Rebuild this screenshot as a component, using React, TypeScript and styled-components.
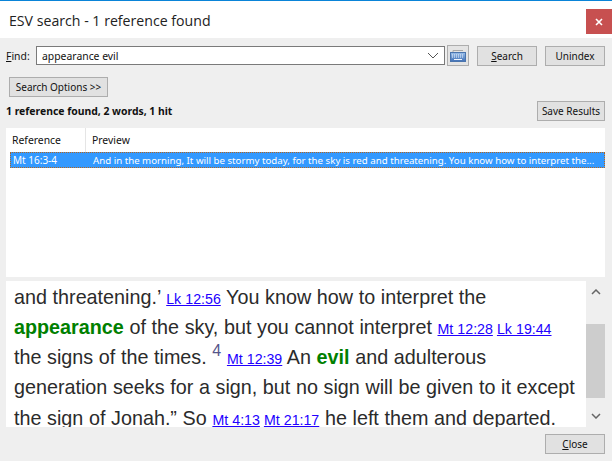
import styled, { createGlobalStyle } from 'styled-components'

const uiFont = `"Noto Sans", "DejaVu Sans", sans-serif`

const GlobalStyle = createGlobalStyle`
  html, body {
    margin: 0;
    padding: 0;
    background: #f0f0f0;
  }
  * {
    box-sizing: border-box;
  }
`

const Dialog = styled.div`
  width: 612px;
  height: 461px;
  display: flex;
  flex-direction: column;
  overflow: hidden;
  background: #efefef;
  font-family: ${uiFont};
  font-size: 10.4px;
  color: #111;
`

const TitleBar = styled.div`
  height: 38px;
  flex: none;
  display: flex;
  justify-content: space-between;
  align-items: flex-start;
  background: #fff;
  border-top: 1px solid #0a84d8;
`

const Title = styled.div`
  margin: 10px 0 0 9px;
  font-family: "Open Sans", sans-serif;
  font-size: 14.15px;
  line-height: 19px;
  color: #222;
`

const CloseBox = styled.div`
  width: 26px;
  height: 25px;
  margin-top: 8px;
  display: flex;
  align-items: center;
  justify-content: center;
  background: #c75050;
`

const Body = styled.div`
  flex: 1;
  display: flex;
  flex-direction: column;
  padding: 0 7px 8px 6px;
`

const FindRow = styled.div`
  height: 21px;
  margin-top: 7px;
  display: flex;
  align-items: center;
`

const FindLabel = styled.label`
  width: 30px;
  flex: none;
`

const Combo = styled.div`
  width: 409px;
  height: 19px;
  flex: none;
  display: flex;
  align-items: center;
  justify-content: space-between;
  padding: 0 5px;
  background: #fff;
  border: 1px solid #7a7a7a;
`

const KeyButton = styled.div`
  width: 22px;
  height: 21px;
  margin: 0 8px 0 2px;
  flex: none;
  display: flex;
  align-items: center;
  justify-content: center;
  background: #e4e4e4;
  border: 1px solid #adadad;
`

const Button = styled.button<{ $width: number }>`
  width: ${p => p.$width}px;
  height: 20px;
  flex: none;
  padding: 0;
  background: #e1e1e1;
  border: 1px solid #adadad;
  font-family: inherit;
  font-size: 10px;
  color: #111;
  white-space: nowrap;
`

const ActionGroup = styled.div`
  display: flex;
  gap: 8px;
`

const OptionsRow = styled.div`
  margin: 11px 0 0 3px;
  flex: none;
`

const ResultBar = styled.div`
  height: 20px;
  margin-top: 4px;
  display: flex;
  align-items: center;
  justify-content: space-between;
`

const Summary = styled.div`
  font-weight: 700;
`

const ResultsPanel = styled.div`
  height: 149px;
  margin-top: 7px;
  flex: none;
  background: #fff;
`

const HeaderRow = styled.div`
  height: 24px;
  display: flex;
  align-items: center;
  padding-left: 6px;
`

const HeaderCell = styled.div<{ $width?: number }>`
  width: ${p => (p.$width ? `${p.$width}px` : 'auto')};
  height: 100%;
  display: flex;
  align-items: center;
  padding-left: ${p => (p.$width ? 0 : 6)}px;
  border-right: ${p => (p.$width ? '1px solid #e5e5e5' : 'none')};
`

const SelectedRow = styled.div`
  height: 16px;
  margin-left: 4px;
  display: flex;
  align-items: center;
  background: #3399ff;
  outline: 1px dotted #b5651d;
  outline-offset: -1px;
  color: #fff;
  font-size: 10px;
  white-space: nowrap;
  overflow: hidden;
`

const RefCell = styled.div`
  width: 83px;
  flex: none;
  padding-left: 3px;
`

const PreviewCell = styled.div`
  flex: 1;
  min-width: 0;
  font-size: 9.7px;
`

const ReaderRow = styled.div`
  height: 146px;
  margin-top: 4px;
  flex: none;
  display: flex;
`

const Reader = styled.div`
  width: 580px;
  flex: none;
  overflow: hidden;
  padding: 1px 0 0 8px;
  background: #fff;
  font-family: "Liberation Sans", Arial, sans-serif;
  font-size: 19.75px;
  word-spacing: 0.15px;
  color: #2b2b2b;
`

const VerseLine = styled.div<{ $height: number }>`
  height: ${p => p.$height}px;
  line-height: ${p => p.$height}px;
  white-space: nowrap;
`

const Hit = styled.b`
  color: #008000;
`

const CrossRef = styled.a`
  font-size: 14.2px;
  color: #2200ff;
  text-decoration: underline;
`

const RefGap = styled.span`
  font-size: 14px;
`

const VerseNum = styled.sup`
  font-size: 16px;
  line-height: 0;
  color: #55558a;
`

const Scrollbar = styled.div`
  width: 19px;
  flex: none;
  display: flex;
  flex-direction: column;
  align-items: center;
`

const ScrollArrow = styled.div`
  height: 22px;
  width: 100%;
  flex: none;
  display: flex;
  align-items: center;
  justify-content: center;
`

const ScrollTrack = styled.div`
  flex: 1;
  width: 100%;
  padding: 21px 0 7px;
`

const ScrollThumb = styled.div`
  height: 74px;
  background: #cdcdcd;
`

const Footer = styled.div`
  margin-top: 7px;
  display: flex;
  justify-content: flex-end;
`

const Accel = styled.span`
  text-decoration: underline;
`

const KeyboardIcon = () => (
  <svg width="16" height="13" viewBox="0 0 16 13">
    <defs>
      <linearGradient id="keys" x1="0" y1="0" x2="0" y2="1">
        <stop offset="0" stopColor="#9cc0ea" />
        <stop offset="1" stopColor="#3f6fb5" />
      </linearGradient>
    </defs>
    <path d="M3 3 V1.5 H13" fill="none" stroke="#a8a8a8" />
    <rect x="0.5" y="3.5" width="15" height="9" fill="url(#keys)" stroke="#4a74ad" />
    <path d="M2 6 H14 M2 8 H14" stroke="#eef4fc" strokeDasharray="1 1" />
    <path d="M4 10.5 H12" stroke="#eef4fc" />
  </svg>
)

const App = () => (
  <Dialog>
    <GlobalStyle />
    <TitleBar>
      <Title>ESV search - 1 reference found</Title>
      <CloseBox>
        <svg width="8" height="8" viewBox="0 0 8 8">
          <path d="M1 1 L7 7 M7 1 L1 7" stroke="#fff" strokeWidth="1.6" />
        </svg>
      </CloseBox>
    </TitleBar>
    <Body>
      <FindRow>
        <FindLabel><Accel>F</Accel>ind:</FindLabel>
        <Combo>
          appearance evil
          <svg width="12" height="7" viewBox="0 0 12 7">
            <path d="M1 1 L6 6 L11 1" fill="none" stroke="#555" />
          </svg>
        </Combo>
        <KeyButton><KeyboardIcon /></KeyButton>
        <ActionGroup>
          <Button $width={60}><Accel>S</Accel>earch</Button>
          <Button $width={60}>Unindex</Button>
        </ActionGroup>
      </FindRow>
      <OptionsRow>
        <Button $width={99}>Search Options &gt;&gt;</Button>
      </OptionsRow>
      <ResultBar>
        <Summary>1 reference found, 2 words, 1 hit</Summary>
        <Button $width={68}>Save Results</Button>
      </ResultBar>
      <ResultsPanel>
        <HeaderRow>
          <HeaderCell $width={74}>Reference</HeaderCell>
          <HeaderCell>Preview</HeaderCell>
        </HeaderRow>
        <SelectedRow>
          <RefCell>Mt 16:3-4</RefCell>
          <PreviewCell>And in the morning, It will be stormy today, for the sky is red and threatening. You know how to interpret the...</PreviewCell>
        </SelectedRow>
      </ResultsPanel>
      <ReaderRow>
        <Reader>
          <VerseLine $height={30}>and threatening.’ <CrossRef>Lk 12:56</CrossRef> You know how to interpret the</VerseLine>
          <VerseLine $height={30}><Hit>appearance</Hit> of the sky, but you cannot interpret <CrossRef>Mt 12:28</CrossRef><RefGap> </RefGap><CrossRef>Lk 19:44</CrossRef></VerseLine>
          <VerseLine $height={30}>the signs of the times. <VerseNum>4</VerseNum> <CrossRef>Mt 12:39</CrossRef> An <Hit>evil</Hit> and adulterous</VerseLine>
          <VerseLine $height={31}>generation seeks for a sign, but no sign will be given to it except</VerseLine>
          <VerseLine $height={31}>the sign of Jonah.” So <CrossRef>Mt 4:13</CrossRef><RefGap> </RefGap><CrossRef>Mt 21:17</CrossRef> he left them and departed.</VerseLine>
        </Reader>
        <Scrollbar>
          <ScrollArrow>
            <svg width="10" height="6" viewBox="0 0 10 6">
              <path d="M1 5 L5 1 L9 5" fill="none" stroke="#666" strokeWidth="1.5" />
            </svg>
          </ScrollArrow>
          <ScrollTrack><ScrollThumb /></ScrollTrack>
          <ScrollArrow>
            <svg width="10" height="6" viewBox="0 0 10 6">
              <path d="M1 1 L5 5 L9 1" fill="none" stroke="#666" strokeWidth="1.5" />
            </svg>
          </ScrollArrow>
        </Scrollbar>
      </ReaderRow>
      <Footer>
        <Button $width={60}><Accel>C</Accel>lose</Button>
      </Footer>
    </Body>
  </Dialog>
)

export default App
